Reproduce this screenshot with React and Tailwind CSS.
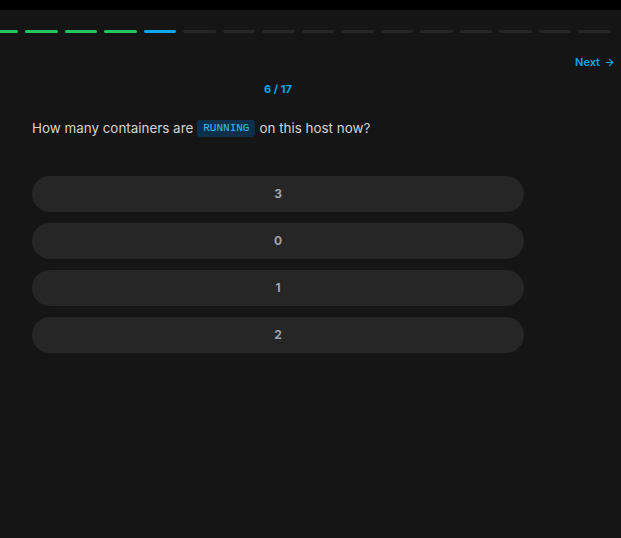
const TOTAL = 17
const CURRENT = 6
const options = ['3', '0', '1', '2']

function Progress() {
  const segs = Array.from({ length: TOTAL }, (_, i) => i + 1)
  return (
    <div className="overflow-hidden">
      <div className="ml-[-54px] flex gap-[7px]">
        {segs.map((n) => (
          <div
            key={n}
            className={
              'h-[3px] w-[32.5px] shrink-0 rounded-full ' +
              (n < CURRENT ? 'bg-[#22c55e]' : n === CURRENT ? 'bg-[#0ea5e9]' : 'bg-[#262626]')
            }
          />
        ))}
      </div>
    </div>
  )
}

export default function App() {
  return (
    <div
      className="flex min-h-[538px] flex-col bg-[#151515]"
      style={{ fontFamily: 'Inter, "Noto Sans", sans-serif' }}
    >
      <div className="h-[10px] bg-black" />
      <div className="pt-[20px]">
        <Progress />
      </div>
      <div className="flex justify-end pr-[6px] pt-[24px]">
        <button className="flex items-center gap-[4px] text-[11px] font-semibold leading-none text-[#0ea5e9]">
          Next
          <svg width="11" height="11" viewBox="0 0 24 24" fill="none" stroke="currentColor" strokeWidth="2.5" strokeLinecap="round" strokeLinejoin="round">
            <path d="M5 12h14" />
            <path d="m12 5 7 7-7 7" />
          </svg>
        </button>
      </div>
      <div className="w-[556px] px-[32px] pt-[16px]">
        <div className="text-center text-[11px] font-bold leading-none text-[#0ea5e9]">
          {CURRENT} / {TOTAL}
        </div>
        <p className="mt-[23px] flex items-center text-[13.4px] leading-[20px] text-[#d4d4d4]">
          How many containers are
          <code
            className="mx-[4px] rounded-[3px] bg-[#0c2f4a] px-[6px] py-[1.5px] text-[11px] leading-[14px] text-[#38bdf8]"
            style={{ fontFamily: '"Liberation Mono", monospace' }}
          >
            RUNNING
          </code>
          on this host now?
        </p>
        <div className="mt-[38px] flex flex-col gap-[11px]">
          {options.map((o) => (
            <button
              key={o}
              className="h-[36px] w-full rounded-full bg-[#262626] text-[12px] font-bold text-[#9ca3af]"
            >
              {o}
            </button>
          ))}
        </div>
      </div>
    </div>
  )
}
